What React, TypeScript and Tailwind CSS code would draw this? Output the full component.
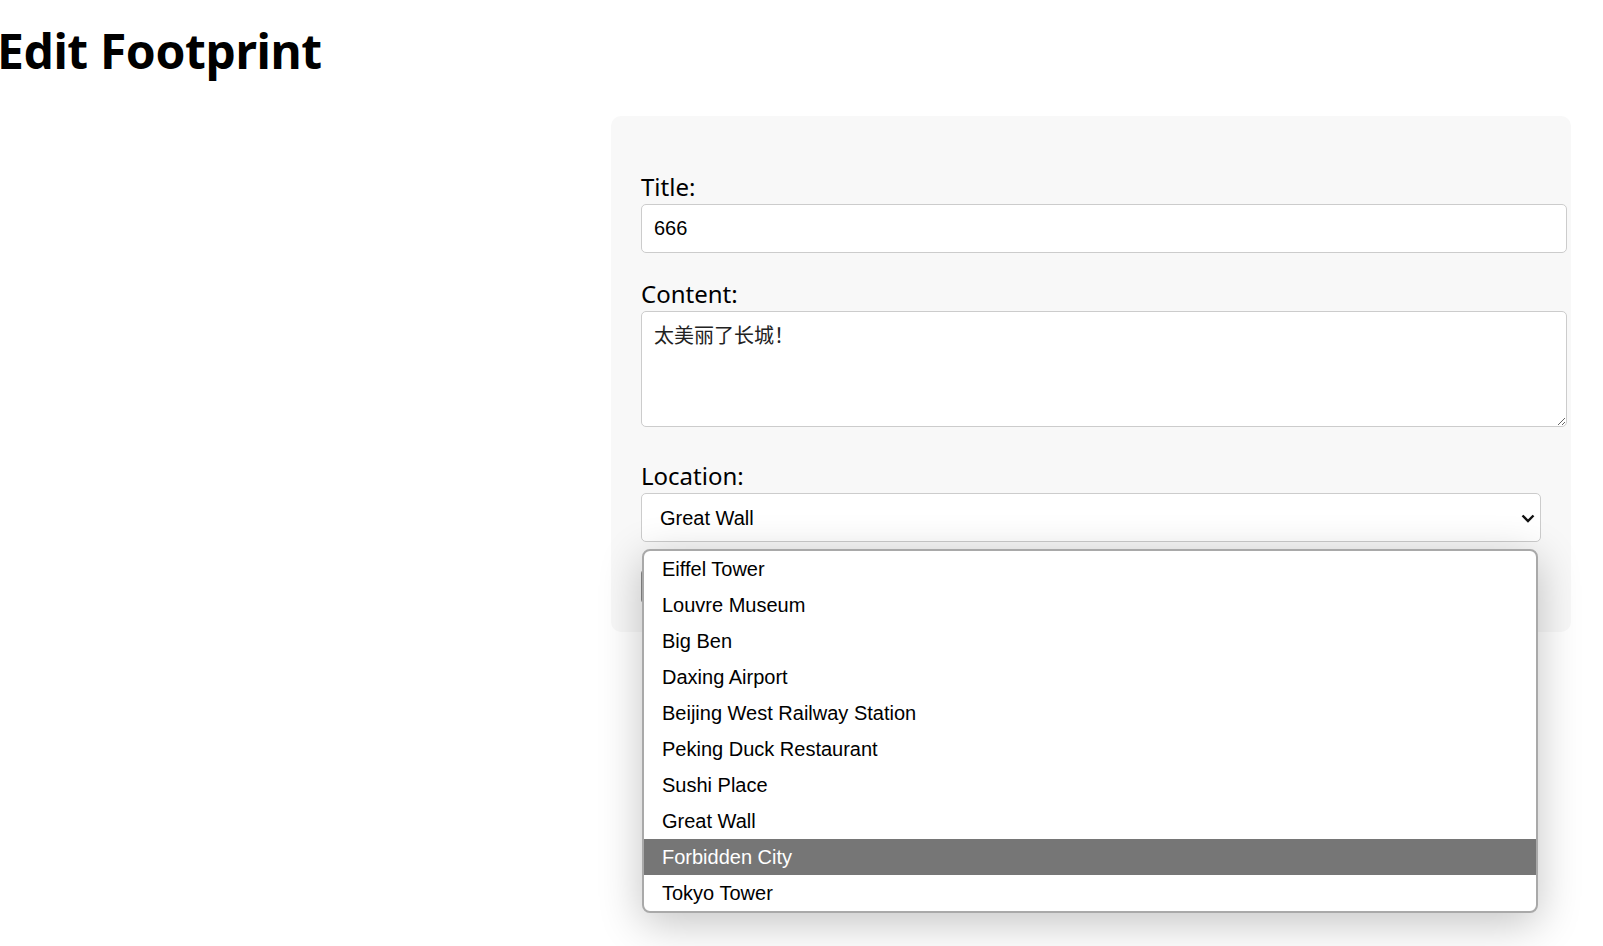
import React from "react";

const options = [
  "Eiffel Tower",
  "Louvre Museum",
  "Big Ben",
  "Daxing Airport",
  "Beijing West Railway Station",
  "Peking Duck Restaurant",
  "Sushi Place",
  "Great Wall",
  "Forbidden City",
  "Tokyo Tower",
];

export default function App() {
  return (
    <div className="min-h-screen bg-white font-['Noto_Sans',sans-serif] text-black">
      <h1 className="ml-[-3px] mt-[27px] text-[48px] font-bold leading-[48px] tracking-[-0.4px]">
        Edit Footprint
      </h1>
      <div className="mt-[41px] flex justify-end pr-[32px]">
        <div className="w-[960px] rounded-[10px] bg-[#f8f8f8] px-[30px] pt-[54px] pb-[29px]">
          <label className="block text-[24px] leading-[34px]">Title:</label>
          <input
            className="box-content block h-[23px] w-full rounded-[5px] border border-[#cccccc] bg-white px-3 py-3 font-['Liberation_Sans',Arial,sans-serif] text-[20px] leading-[23px] text-black outline-none"
            defaultValue="666"
          />
          <label className="mt-[24px] block text-[24px] leading-[34px]">Content:</label>
          <textarea
            className="box-content block h-[90px] w-full rounded-[5px] border border-[#cccccc] bg-white px-3 py-3 font-['Noto_Sans_CJK_SC',sans-serif] text-[20px] leading-[22px] text-[#222] outline-none"
            defaultValue="太美丽了长城！"
          />
          <label className="mt-[32px] block text-[24px] leading-[34px]">Location:</label>
          <div className="relative">
            <div className="flex h-[49px] w-full items-center justify-between rounded-[5px] border border-[#cccccc] bg-white pl-[18px] pr-[4px] font-['Liberation_Sans',Arial,sans-serif] text-[20px] text-black">
              <span>Great Wall</span>
              <svg width="16" height="12" viewBox="0 0 16 12">
                <path d="M2.5 3.5 L8 9 L13.5 3.5" fill="none" stroke="#111" strokeWidth="2.4" />
              </svg>
            </div>
            <button
              aria-hidden="true"
              className="mt-[28px] block h-[33px] w-[120px] rounded-[3px] border border-[#888] bg-[#eee]"
            />
            <div className="absolute left-[1px] top-[56px] z-10 w-[896px] overflow-hidden rounded-[8px] border-2 border-[#a9a9a9] bg-white shadow-[0_10px_44px_rgba(0,0,0,0.24)] font-['Liberation_Sans',Arial,sans-serif] text-[20px]">
              {options.map((o) => (
                <div
                  key={o}
                  className={
                    o === "Forbidden City"
                      ? "flex h-[36px] items-center bg-[#767676] pl-[18px] text-white"
                      : "flex h-[36px] items-center pl-[18px] text-black"
                  }
                >
                  {o}
                </div>
              ))}
            </div>
          </div>
        </div>
      </div>
    </div>
  );
}
